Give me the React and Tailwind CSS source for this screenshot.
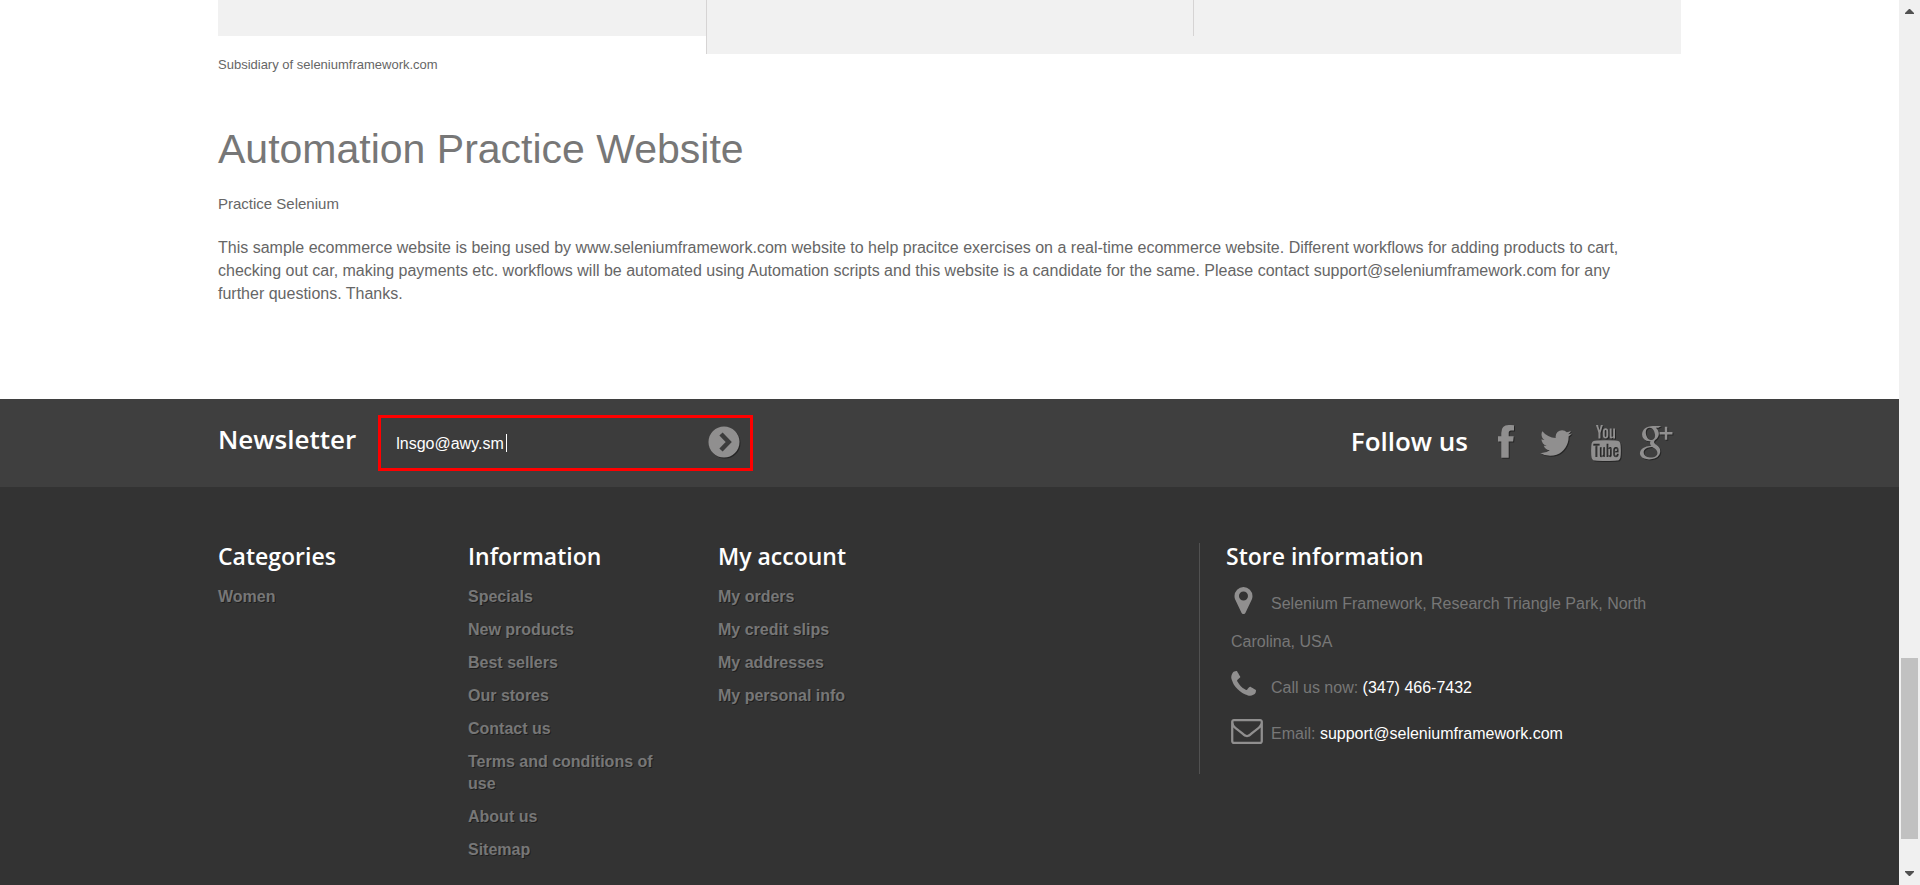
const GLYPHS = {
  facebook:
    "M26 .2v5.3h-3q-2.3 0-2.3 2.6v3.2h5l-.6 5.2h-4.4v16.3h-7.4V16.5H10v-5.2h3.3V8q0-7.9 7.4-7.9h2.3q1.6 0 3 .1z",
  twitter:
    "M1684 408q-67 98-162 167 1 14 1 42 0 130-38 259.5t-115.5 248.5-184.5 210.5-258 146-323 54.5q-271 0-496-145 35 4 78 4 225 0 401-138-105-2-188-64.5t-114-159.5q33 5 61 5 43 0 85-11-112-23-185.5-111.5t-73.5-205.5v-4q68 38 146 41-66-44-105-115t-39-154q0-88 44-163 121 149 294.5 238.5t371.5 99.5q-8-38-8-74 0-134 94.5-228.5t228.5-94.5q140 0 236 102 109-21 205-78-37 115-142 178 93-10 186-50z",
  youtube:
    "M1099 1244v211q0 67-39 67-23 0-45-22v-301q22-22 45-22 39 0 39 67zm338 1v46h-90v-46q0-68 45-68t45 68zm-966-218h107v-94h-312v94h105v569h100v-569zm288 569h89v-494h-89v378q-30 42-57 42-18 0-21-21-1-3-1-35v-364h-89v391q0 49 8 73 12 37 58 37 48 0 102-61v54zm429-148v-197q0-73-9-99-17-56-71-56-50 0-93 54v-217h-89v663h89v-48q45 55 93 55 54 0 71-55 9-27 9-100zm338-10v-13h-91q0 51-2 61-7 36-40 36-46 0-46-69v-87h179v-103q0-79-27-116-39-51-106-51-68 0-107 51-28 37-28 116v173q0 79 29 116 39 51 108 51 72 0 108-53 18-27 21-54 2-9 2-58zm-608-913v-210q0-69-43-69t-43 69v210q0 70 43 70t43-70zm719 751q0 234-26 350-14 59-58 99t-102 46q-184 21-555 21t-555-21q-58-6-102.5-46t-57.5-99q-26-112-26-350 0-234 26-350 14-59 58-99t103-47q183-20 554-20t555 20q58 7 102.5 47t57.5 99q26 112 26 350zm-998-1276h102l-121 399v271h-100v-271q-14-74-61-212-37-103-65-187h106l71 263zm370 333v175q0 81-28 118-38 51-106 51-67 0-105-51-28-38-28-118v-175q0-80 28-117 38-51 105-51 68 0 106 51 28 37 28 117zm335-162v499h-91v-55q-53 62-103 62-46 0-59-37-8-24-8-75v-394h91v367q0 33 1 35 3 22 21 22 27 0 57-43v-381h91z",
  google:
    "M799 796q0 36 32 70.5t77.5 68 90.5 73.5 77 104 32 142q0 90-48 173-72 122-211 179.5t-298 57.5q-132 0-246.5-41.5t-171.5-137.5q-37-60-37-131 0-81 44.5-150t118.5-115q131-82 404-100-32-42-47.5-73.5t-15.5-73.5q0-36 21-85-46 4-68 4-148 0-249.5-96.5t-101.5-244.5q0-82 36-159t99-131q77-66 182.5-98t217.5-32h418l-138 88h-131q74 63 112 133t38 160q0 72-24.5 129.5t-59 93-69.5 65-59.5 61.5-24.5 66zm-146-96q38 0 78-16.5t66-43.5q53-57 53-159 0-58-17-125t-48.5-129.5-84.5-103.5-117-41q-42 0-82.5 19.5t-65.5 52.5q-47 59-47 160 0 46 10 97.5t31.5 103 52 92.5 75 67 96.5 26zm2 873q58 0 111.5-13t99-39 73-73 27.5-109q0-25-7-49t-14.5-42-27-41.5-29.5-35-38.5-34.5-36.5-29-41.5-30-36.5-26q-16-2-48-2-53 0-105 7t-107.5 25-97 46-68.5 74.5-27 105.5q0 70 35 123.5t91.5 83 119 44 127.5 14.5zM1455 38v260h260v120h-260v260h-120v-260h-260v-120h260v-260z",
  marker:
    "M1152 640q0-106-75-181t-181-75-181 75-75 181 75 181 181 75 181-75 75-181zm256 0q0 109-33 179l-364 774q-16 33-47.5 52t-67.5 19-67.5-19-46.5-52l-365-774q-33-70-33-179 0-212 150-362t362-150 362 150 150 362z",
  phone:
    "M1600 1240q0 27-10 70.5t-21 68.5q-21 50-122 106-94 51-186 51-27 0-53-3.5t-57.5-12.5-47-14.5-55.5-20.5-49-18q-98-35-175-83-127-79-264-216t-216-264q-48-77-83-175-3-9-18-49t-20.5-55.5-14.5-47-12.5-57.5-3.5-53q0-92 51-186 56-101 106-122 25-11 68.5-21t70.5-10q14 0 21 3 18 6 53 76 11 19 30 54t35 63.5 31 53.5q3 4 17.5 25t21.5 35.5 7 28.5q0 20-28.5 50t-62 55-62 53-28.5 46q0 9 5 22.5t8.5 20.5 14 24 11.5 19q76 137 174 235t235 174q2 1 19 11.5t24 14 20.5 8.5 22.5 5q18 0 46-28.5t53-62 55-62 50-28.5q14 0 28.5 7t35.5 21.5 25 17.5q25 15 53.5 31t63.5 35 54 30q70 35 76 53 3 7 3 21z",
  envelope:
    "M1664 1504v-768q-32 36-69 66-268 206-426 338-51 43-83 67t-86.5 48.5-102.5 24.5h-2q-48 0-102.5-24.5t-86.5-48.5-83-67q-158-132-426-338-37-30-69-66v768q0 13 9.5 22.5t22.5 9.5h1472q13 0 22.5-9.5t9.5-22.5zm0-1051v-24.5l-.5-13-3-12.5-5.5-9-9-7.5-14-2.5h-1472q-13 0-22.5 9.5t-9.5 22.5q0 168 147 284 193 152 401 317 6 5 35 29.5t46 37.5 44.5 31.5 50.5 27.5 43 9h2q20 0 43-9t50.5-27.5 44.5-31.5 46-37.5 35-29.5q208-165 401-317 54-43 100.5-115.5t46.5-131.5zm128-37v1088q0 66-47 113t-113 47h-1472q-66 0-113-47t-47-113v-1088q0-66 47-113t113-47h1472q66 0 113 47t47 113z",
};

function Glyph({ name, box = "0 0 1792 1792", className }) {
  return (
    <svg viewBox={box} fill="currentColor" aria-hidden="true" className={className}>
      <path d={GLYPHS[name]} />
    </svg>
  );
}

const SOCIAL = [
  { name: "facebook", label: "Facebook", box: "0 0 36 36" },
  { name: "twitter", label: "Twitter" },
  { name: "youtube", label: "YouTube" },
  { name: "google", label: "Google Plus", box: "0 -50 1792 1792" },
];

const COLUMNS = [
  { title: "Categories", links: ["Women"] },
  {
    title: "Information",
    links: [
      "Specials",
      "New products",
      "Best sellers",
      "Our stores",
      "Contact us",
      "Terms and conditions of use",
      "About us",
      "Sitemap",
    ],
  },
  {
    title: "My account",
    links: ["My orders", "My credit slips", "My addresses", "My personal info"],
  },
];

const HEADING = "font-['Open_Sans',sans-serif] font-semibold text-white";
const CONTACT_ICON = "mr-2 inline w-8 align-[-5px] text-[#908f8f]";

function LinkColumn({ title, links }) {
  return (
    <section className="w-[250px] pr-10">
      <h4 className={`${HEADING} text-[23px] leading-[26px]`}>{title}</h4>
      <ul className="mt-[17px] flex flex-col gap-[11px]">
        {links.map((label) => (
          <li key={label} className="text-base leading-[22px] font-bold">
            <a href="#" className="text-shadow-[1px_1px_0_rgba(0,0,0,0.4)]">
              {label}
            </a>
          </li>
        ))}
      </ul>
    </section>
  );
}

function Scrollbar() {
  return (
    <div aria-hidden="true" className="flex w-[21px] shrink-0 flex-col items-center bg-[#f0f0f0] text-[#505050]">
      <svg viewBox="0 0 9 5" className="mt-[9px] h-[5px] w-[9px]" fill="currentColor">
        <path d="M4 0h1l4 4v1H0V4z" />
      </svg>
      <div className="flex-[644]" />
      <div className="w-[17px] flex-[181] bg-[#c1c1c1]" />
      <div className="flex-[32]" />
      <svg viewBox="0 0 9 5" className="mb-[9px] h-[5px] w-[9px]" fill="currentColor">
        <path d="M0 0h9v1L5 5H4L0 1z" />
      </svg>
    </div>
  );
}

export default function App() {
  return (
    <div className="flex min-h-screen bg-white font-['Liberation_Sans',Arial,sans-serif] text-[#666]">
      <div className="flex min-w-0 flex-1 flex-col">
        <main className="mx-auto w-full max-w-[1463px] pb-[94px]">
          <div className="grid grid-cols-3">
            <div className="h-9 bg-[#f1f1f1]" />
            <div className="h-[54px] border-l border-[#d6d4d4] bg-[#f1f1f1]" />
            <div className="h-[54px] bg-[#f1f1f1]">
              <div className="h-9 border-l border-[#d6d4d4]" />
            </div>
          </div>
          <p className="text-[13px] leading-[22px]">Subsidiary of seleniumframework.com</p>
          <h1 className="mt-[50px] text-[41px] leading-[46px] text-[#777]">Automation Practice Website</h1>
          <h3 className="mt-5 text-[15px] leading-6">Practice Selenium</h3>
          <p className="mt-5 pr-10 text-base leading-[23px]">
            This sample ecommerce website is being used by www.seleniumframework.com website to help pracitce exercises
            on a real-time ecommerce website. Different workflows for adding products to cart, checking out car, making
            payments etc. workflows will be automated using Automation scripts and this website is a candidate for the
            same. Please contact support@seleniumframework.com for any further questions. Thanks.
          </p>
        </main>

        <footer className="flex-1 bg-[#333] text-[#777]">
          <div className="bg-[#3f3f3f]">
            <div className="mx-auto flex h-[88px] w-full max-w-[1463px] items-center justify-between">
              <form className="flex items-center gap-[22px]" onSubmit={(e) => e.preventDefault()}>
                <label htmlFor="newsletter" className={`${HEADING} pb-2 text-[26px] leading-9`}>
                  Newsletter
                </label>
                <div className="relative flex h-14 w-[375px] items-center border-[3px] border-[#f00] bg-[#3c3c3c] pr-[10px] pl-[15px]">
                  <input
                    id="newsletter"
                    type="text"
                    defaultValue="lnsgo@awy.sm"
                    className="min-w-0 flex-1 bg-transparent pt-0.5 text-base text-white outline-none"
                  />
                  <span aria-hidden="true" className="absolute top-4 left-[125px] h-[18px] w-px bg-white" />
                  <button type="submit" aria-label="Subscribe" className="pb-0.5">
                    <svg
                      viewBox="-16 -16 32 32"
                      aria-hidden="true"
                      className="size-8 drop-shadow-[1px_1px_0_rgba(0,0,0,0.4)]"
                    >
                      <circle r="15.5" fill="#908f8f" />
                      <path d="M-3-8L4.7 0L-3 8" fill="none" stroke="#3c3c3c" strokeWidth="4.5" />
                    </svg>
                  </button>
                </div>
              </form>
              <div className="flex items-center gap-5 pr-[7px]">
                <h4 className={`${HEADING} pb-1 text-[26px] leading-9`}>Follow us</h4>
                <ul className="flex gap-[14px]">
                  {SOCIAL.map(({ name, label, box }) => (
                    <li key={name}>
                      <a href="#" aria-label={label} className="block text-[#908f8f]">
                        <Glyph name={name} box={box} className="size-9 drop-shadow-[1px_1px_0_rgba(0,0,0,0.4)]" />
                      </a>
                    </li>
                  ))}
                </ul>
              </div>
            </div>
          </div>

          <div className="mx-auto flex w-full max-w-[1463px] items-start pt-14">
            {COLUMNS.map((column) => (
              <LinkColumn key={column.title} {...column} />
            ))}
            <section className="ml-auto h-[231px] w-[482px] border-l border-[#515151] pl-[26px]">
              <h4 className={`${HEADING} text-[23px] leading-[26px]`}>Store information</h4>
              <ul className="mt-4 flex flex-col gap-2 pr-8 pl-[5px] text-base leading-[38px]">
                <li>
                  <Glyph name="marker" box="200 128 1792 1536" className={`${CONTACT_ICON} h-[27px]`} />
                  Selenium Framework, Research Triangle Park, North Carolina, USA
                </li>
                <li>
                  <Glyph name="phone" box="192 128 1792 1536" className={`${CONTACT_ICON} h-[27px]`} />
                  Call us now: <span className="text-white">(347) 466-7432</span>
                </li>
                <li>
                  <Glyph name="envelope" box="0 256 1792 1408" className={`${CONTACT_ICON} h-[25px]`} />
                  Email:{" "}
                  <a href="#" className="text-white">
                    support@seleniumframework.com
                  </a>
                </li>
              </ul>
            </section>
          </div>
        </footer>
      </div>
      <Scrollbar />
    </div>
  );
}
